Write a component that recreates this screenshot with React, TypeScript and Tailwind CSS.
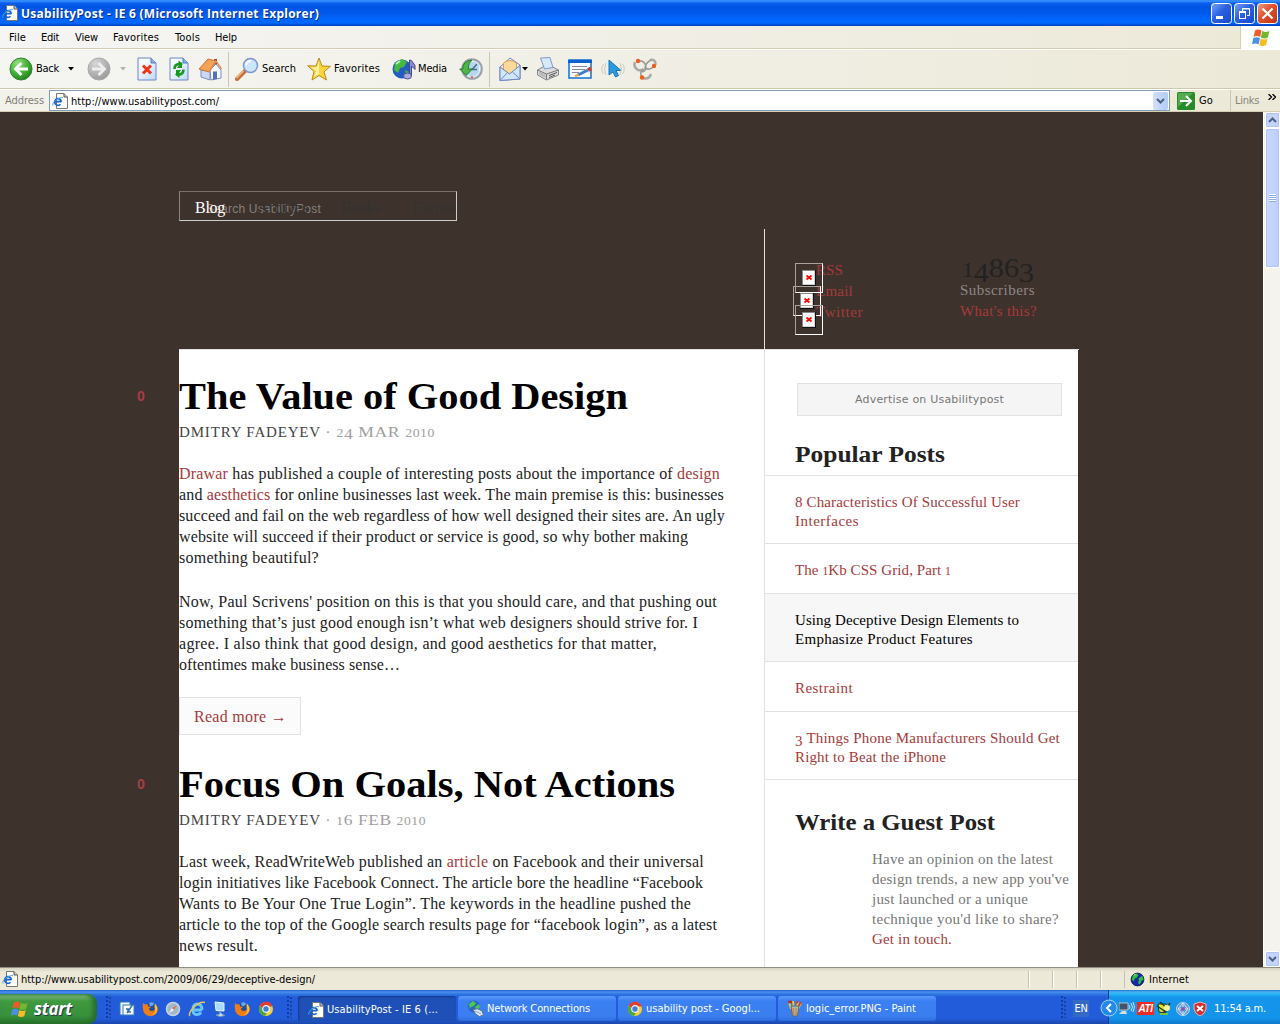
import React, { useLayoutEffect, useRef } from "react";

type FitProps = { w: number; className?: string; children: React.ReactNode; wide?: boolean };

/* One line of text that fills w pixels, by tracking or, when wide, by stretching the letters. */
function Fit({ w, className = "", children, wide }: FitProps) {
  const ref = useRef<HTMLSpanElement>(null);
  useLayoutEffect(() => {
    const el = ref.current;
    if (!el) return;
    el.style.letterSpacing = "";
    el.style.transform = "none";
    const natural = el.getBoundingClientRect().width;
    if (wide) {
      el.style.transform = `scaleX(${w / natural})`;
      return;
    }
    el.style.letterSpacing = "0px";
    const plain = el.getBoundingClientRect().width;
    const count = (el.textContent || "").length;
    el.style.letterSpacing = `${(w - plain) / count}px`;
  }, [w, wide]);
  return (
    <span ref={ref} className={`inline-block origin-left whitespace-nowrap ${className}`}>
      {children}
    </span>
  );
}

/* Text figures: 0-2 at x-height, 6 and 8 tall, the others hanging. */
function Old({ n }: { n: string }) {
  return (
    <>
      {n.split("").map((c, i) =>
        "012".includes(c) ? (
          <span key={i} className="text-[0.78em]">{c}</span>
        ) : "34579".includes(c) ? (
          <span key={i} className="relative top-[0.17em]">{c}</span>
        ) : (
          <span key={i}>{c}</span>
        )
      )}
    </>
  );
}

const serif = "font-['Liberation_Serif',serif]";
const red = "text-[#a63a3a]";

const IEPage = ({ className = "" }: { className?: string }) => (
  <svg width="16" height="16" viewBox="0 0 16 16" className={`shrink-0 ${className}`}>
    <path d="M4.500.5h7.500l3.500 3.500v11.500h-11z" fill="#fdfdf5" stroke="#777" />
    <path d="M12 .5V4h3.500" fill="#ccc" stroke="#555" />
    <path d="M9.300 8.800a3.300 3.300 0 1 0-.8 2.400M3 8.600h6.300" fill="none" stroke="#1765c4" strokeWidth="1.700" />
    <path d="M.8 12.500C0 9 6 4.300 11 4.500" fill="none" stroke="#4aa3ee" strokeWidth="1" />
  </svg>
);
const Flag = ({ s = 20 }: { s?: number }) => (
  <svg width={s} height={s} viewBox="0 0 20 20" className="shrink-0">
    <path d="M4 2.500q3-2 6.500.1L9.200 9q-3-2-6.600-.3z" fill="#ee5a28" />
    <path d="M11.300 3q3.500 2 7.200.1L16.800 9.500q-3.400 1.800-7-.1z" fill="#76b82d" />
    <path d="M2.300 10q3.400-1.800 6.700.2L7.500 16.500q-3-2-6.500-.3z" fill="#4a90e4" />
    <path d="M9.700 10.500q3.400 2 6.900.1L15 17q-3.500 1.800-6.700-.1z" fill="#f6bd22" />
  </svg>
);
const Globe = ({ s = 16 }: { s?: number }) => (
  <svg width={s} height={s} viewBox="0 0 16 16" className="shrink-0">
    <circle cx="8" cy="8" r="6.800" fill="#1428a8" stroke="#092058" />
    <path d="M3 4l4-2.500 2 2-2 2.500-2 1-1 3-2-2zM9 7l4-3 1.500 4-2 1-2 4-2-1 1-3z" fill="#32c232" />
    <path d="M4 3.500l2-1" stroke="#baffba" />
  </svg>
);
const Chrome = () => (
  <svg width="16" height="16" viewBox="0 0 16 16" className="shrink-0">
    <circle cx="8" cy="8" r="7" fill="#f5cf33" />
    <path d="M1.800 4.500A7 7 0 0 1 14.600 5.500H8L5 8.500z" fill="#e33b2e" />
    <path d="M1.800 4.500A7 7 0 0 0 7 15l3-5-5-1z" fill="#48a83f" />
    <circle cx="8" cy="8" r="3.300" fill="#3e7fd8" stroke="#f4f4f4" strokeWidth="1.200" />
  </svg>
);
const Firefox = () => (
  <svg width="17" height="16" viewBox="0 0 17 16" className="shrink-0">
    <circle cx="8.500" cy="8" r="6.300" fill="#244d9c" />
    <path d="M7 2q3-1.500 5 .5l-1 2-3 1z" fill="#6aa6e8" />
    <path d="M1 2l2 1.500L5.500 3 6 5.500 9 6 7 7.500q0 2.500 3 2.500 3-.2 3-4V2.500Q16.500 6 15.500 10 14 15 8.500 15.300 3 15 1.300 10 .3 6 1 2z" fill="#ef7d17" />
    <path d="M12.500 6q3 5-3 8 5-.5 5.800-5.500.2-3-2.500-6z" fill="#ffc52b" />
  </svg>
);
const Net = () => (
  <svg width="17" height="17" viewBox="0 0 17 17" className="shrink-0">
    <circle cx="7" cy="6.500" r="6" fill="#2a64c8" />
    <path d="M2 4l4-3 3 2-2 3-3 1-1 2zM8 7l4-3 1 3-3 4z" fill="#4cc84a" />
    <path d="M6 9.500q5-2 9 1.500l1.500 4-4 1.500-4-2.500z" fill="#dfe9f2" stroke="#53718c" />
    <path d="M8 11l6 3" stroke="#7da2c4" />
  </svg>
);
const PaintCup = () => (
  <svg width="16" height="17" viewBox="0 0 16 17" className="shrink-0">
    <path d="M4 9L2 2M7 9L6 1M9 9l2-7M11 9l3-6" stroke="#f5c73c" strokeWidth="1.800" />
    <path d="M1 2h4" stroke="#a93525" strokeWidth="2.500" />
    <path d="M9 4l2-3M12 6l2-4" stroke="#d93b22" strokeWidth="1.600" />
    <path d="M4 6h8l-1.500 10h-5z" fill="#a8bcae" stroke="#596b67" />
    <path d="M6 8l1 7M9 8v7" stroke="#e96828" />
  </svg>
);
const Caret = ({ c = "#000" }: { c?: string }) => (
  <svg width="6" height="4" viewBox="0 0 6 4" className="shrink-0">
    <path d="M0 0h6L3 3.500z" fill={c} />
  </svg>
);
const Round = ({ on }: { on?: boolean }) => (
  <svg width="24" height="24" viewBox="0 0 24 24" className="shrink-0">
    <defs>
      <radialGradient id={on ? "rg" : "rx"} cx=".35" cy=".25" r=".8">
        <stop offset="0" stopColor={on ? "#94df7d" : "#d7d7d7"} />
        <stop offset=".6" stopColor={on ? "#3fae31" : "#b1b1b1"} />
        <stop offset="1" stopColor={on ? "#24801c" : "#999"} />
      </radialGradient>
    </defs>
    <circle cx="12" cy="12" r="11" fill={on ? "url(#rg)" : "url(#rx)"} stroke={on ? "#36813a" : "#aaa"} />
    <path
      d={on ? "M19 12H7M12.500 6L6.500 12l6 6" : "M5 12h12M11.500 6l6 6-6 6"}
      fill="none" stroke={on ? "#fff" : "#eee"} strokeWidth="2.800"
    />
  </svg>
);
const Doc = ({ refresh }: { refresh?: boolean }) => (
  <svg width="20" height="24" viewBox="0 0 20 24" className="shrink-0">
    <defs>
      <linearGradient id="docg" x1="0" y1="0" x2="1" y2="1"><stop offset=".3" stopColor="#f5f9ff" /><stop offset="1" stopColor="#bcd8fb" /></linearGradient>
    </defs>
    <path d="M1 1h13l5 5v17H1z" fill="url(#docg)" stroke="#6c88c4" />
    <path d="M14 1v5h5" fill="#86b3ec" stroke="#587cbc" />
    {refresh ? (
      <g fill="none" stroke="#159a1e" strokeWidth="2.600">
        <path d="M5.500 12q0-5 5-5M14.500 12.500q0 5-5 5" />
        <path d="M9.500 3.500V11L14 7zM10.500 21v-7.500L6 17.500z" fill="#159a1e" stroke="none" />
        <path d="M13 5v6H8zM7 19v-6h5z" fill="#159a1e" stroke="none" />
      </g>
    ) : (
      <path d="M6 8.500l8 8M14 8.500l-8 8" stroke="#ee3518" strokeWidth="3" />
    )}
  </svg>
);
const Home = () => (
  <svg width="24" height="24" viewBox="0 0 24 24" className="shrink-0">
    <path d="M16 2h3v6h-3z" fill="#a63d2a" />
    <path d="M12 13l6-6 5 6v8l-10 2z" fill="#f8f9ff" stroke="#7a8cc0" />
    <path d="M3 13l9 1v9l-9-3z" fill="#cad8f6" stroke="#7a8cc0" />
    <path d="M1 12L10 2l8 2-7 11z" fill="#f3a258" stroke="#cc7029" />
    <path d="M11 15l7-11 5.500 8" fill="none" stroke="#d89058" strokeWidth="1.500" />
    <path d="M15 14.500h4V22l-4 .7z" fill="#4d74b4" />
  </svg>
);
const Lens = () => (
  <svg width="24" height="24" viewBox="0 0 24 24" className="shrink-0">
    <path d="M2 22l8-8" stroke="#c96e38" strokeWidth="4" strokeLinecap="round" />
    <path d="M1.500 21l7-7" stroke="#f2bb85" strokeWidth="1.500" />
    <circle cx="15.500" cy="8.500" r="7" fill="#cbe6fc" stroke="#8296c9" strokeWidth="1.500" />
    <path d="M11 8q1-4 5-4" stroke="#fff" strokeWidth="2" fill="none" />
  </svg>
);
const StarIcon = () => (
  <svg width="24" height="24" viewBox="0 0 24 24" className="shrink-0">
    <path d="M12 1l3 8 8.500.3-6.500 5.500L19.500 23 12 18.500 5 23l2-8.500L.7 8.800 9 9z" fill="#fbd53b" stroke="#bd8a1c" />
    <path d="M12 4v13l-5 3 2-6-5-4 6 .3z" fill="#fff1a0" />
  </svg>
);
const Media = () => (
  <svg width="24" height="22" viewBox="0 0 24 22" className="shrink-0">
    <circle cx="10" cy="11" r="9.500" fill="#225bc4" />
    <path d="M3 5l7-4 5 3-3 5-4 1-2 5-4-3zM13 12l4 2-3 5z" fill="#46b83b" />
    <path d="M4 6l4-3" stroke="#b6f49b" strokeWidth="2" />
    <path d="M17.500 17V2l2 .5 3.500 5v4l-3.500-3.500V18" fill="#8c8dcc" stroke="#45458f" />
    <ellipse cx="15.500" cy="18" rx="4" ry="3" fill="#a9a9de" stroke="#505095" />
  </svg>
);
const History = () => (
  <svg width="24" height="24" viewBox="0 0 24 24" className="shrink-0">
    <circle cx="13" cy="12" r="9.800" fill="#d8eaf3" stroke="#9aa1a8" strokeWidth="2" />
    <circle cx="13" cy="12" r="7.500" fill="#b4d9ee" stroke="#f5f8fa" strokeDasharray="2 3" />
    <path d="M18 7l-5 5.500h5" fill="none" stroke="#4d6b8f" strokeWidth="1.500" />
    <path d="M13 19v2" stroke="#e2532e" strokeWidth="1.500" />
    <path d="M.7 12h3q0-8 9-9-3.500 3-3.500 9h4l-6 6.500z" fill="#4eb645" stroke="#26792b" />
  </svg>
);
const Mail = () => (
  <svg width="22" height="24" viewBox="0 0 22 24" className="shrink-0">
    <path d="M1 10L11 1l10 7v14L1 23.500z" fill="#e6effc" stroke="#7784c4" />
    <path d="M4.500 6q6-5 13 0v8l-7 3-6-4z" fill="#fbd998" stroke="#daa04e" />
    <path d="M1 10l9.500 7L21 8.500V22L1 23.500z" fill="#cfe7fb" stroke="#6f82c7" />
    <path d="M1 23.500l7.500-8M21 22l-7.500-7" stroke="#6f82c7" />
  </svg>
);
const Printer = () => (
  <svg width="24" height="24" viewBox="0 0 24 24" className="shrink-0">
    <path d="M1.500 13l7-4 8 1 6 3v5l-12 5-9-5z" fill="#ddd" stroke="#81868c" />
    <path d="M4.500 1l9.500-.5L17 10.500l-8.500 1.500z" fill="#d5e8fc" stroke="#7c9cc9" />
    <path d="M1.500 13l9 4 12-4M10.500 17v5.500" fill="none" stroke="#777" />
    <path d="M3 14.500l6.500 3v3.500L3 17.500z" fill="#b9b9b9" />
    <path d="M13 18.500l8-3M13 20.500l6-2.500" stroke="#555" />
  </svg>
);
const Edit = () => (
  <svg width="24" height="20" viewBox="0 0 24 20" className="shrink-0">
    <rect x="1" y="1" width="22" height="18" fill="#f8fcff" stroke="#116fd0" strokeWidth="1.500" />
    <path d="M0 1h24v3H0z" fill="#0961cf" />
    <path d="M4 7.500h15M4 10.500h13M4 13.500h7" stroke="#889" />
    <path d="M10 16l10-5" stroke="#397fd0" strokeWidth="3" />
    <path d="M20 11l3-1.500" stroke="#d83c22" strokeWidth="4" />
    <path d="M7 17.500l3.500-2" stroke="#eba942" strokeWidth="2.500" />
  </svg>
);
const Pointer = () => (
  <svg width="24" height="20" viewBox="0 0 24 20" className="shrink-0">
    <path d="M8 1v15l4-3 2.500 5 3-1.500-2.500-5h5z" fill="#299be2" stroke="#1a74b7" />
    <path d="M5 4q-3 6 0 12M2.500 5q-3.500 5 0 10M19 4q3 6 0 12M21.500 5q3.500 5 0 10" stroke="#c9c9c3" fill="none" />
  </svg>
);
const Knot = () => (
  <svg width="24" height="23" viewBox="0 0 24 23" className="shrink-0">
    <g fill="none">
      <path d="M2 4Q0 9 5 12q4 1 6-1M17 2q6-1 5.500 5M10 20q6 2 8-4" stroke="#aaa" strokeWidth="2.500" />
      <path d="M5 3q7-1 8 6 0 4-4 5M12 11q0-6 6-9M9 19q-3-4 1-8M21 8q-4 5-9 2" stroke="#999" strokeWidth="1.500" />
    </g>
    <circle cx="5" cy="3" r="2.200" fill="#f25d16" />
    <circle cx="21" cy="8" r="2.200" fill="#f25d16" />
    <circle cx="9" cy="19.500" r="2.200" fill="#f25d16" />
  </svg>
);
const WinButton = ({ kind }: { kind: "min" | "restore" | "close" }) => (
  <svg width="21" height="21" viewBox="0 0 21 21" className="shrink-0">
    <defs>
      <linearGradient id={`wb${kind}`} x1="0" y1="0" x2="1" y2="1">
        <stop offset="0" stopColor={kind === "close" ? "#f0a08a" : "#7aa4f6"} />
        <stop offset=".45" stopColor={kind === "close" ? "#e0502c" : "#2b61e0"} />
        <stop offset="1" stopColor={kind === "close" ? "#bd3410" : "#1749cd"} />
      </linearGradient>
    </defs>
    <rect x=".5" y=".5" width="20" height="20" rx="3" fill={`url(#wb${kind})`} stroke="#fff" />
    {kind === "min" && <path d="M5 14.500h7" stroke="#fff" strokeWidth="3" />}
    {kind === "restore" && (
      <g fill="none" stroke="#fff">
        <path d="M8.500 8V5.500h7v7H13M8 6h8" />
        <rect x="5.500" y="9.500" width="6" height="6" /><path d="M5 9h7" strokeWidth="2" />
      </g>
    )}
    {kind === "close" && <path d="M5.500 5.500l10 10M15.500 5.500l-10 10" stroke="#fff" strokeWidth="2.200" />}
  </svg>
);
const ScrollButton = ({ down }: { down?: boolean }) => (
  <div className="flex h-[16px] w-[15px] shrink-0 items-center justify-center rounded-[2px] border border-white bg-[#c4d4fb] shadow-[inset_0_0_0_1px_#b0c5f5]">
    <svg width="9" height="6" viewBox="0 0 9 6">
      <path d={down ? "M1 1l3.500 3.500L8 1" : "M1 5l3.500-3.500L8 5"} stroke="#4d6185" strokeWidth="2" fill="none" />
    </svg>
  </div>
);

function MissingImage({ className = "" }: { className?: string }) {
  return (
    <div className={`absolute h-[30px] w-[28px] border border-b-white border-l-[#aaa39c] border-r-white border-t-[#aaa39c] ${className}`}>
      <svg width="14" height="16" viewBox="0 0 14 16" className="ml-[6px] mt-[6px]">
        <path d="M0 0h14v16H0z" fill="#111" />
        <path d="M0 0h13v15H0z" fill="#888" />
        <path d="M1 1h12v14H1z" fill="#d0d0d0" />
        <path d="M1 1h11v13H1z" fill="#fff" />
        <path d="M4.500 5.500l5 4M9.500 5.500l-5 4" stroke="#f00" strokeWidth="1.800" />
      </svg>
    </div>
  );
}

function Tool({ icon, text, w, gap = "gap-[3px]" }: { icon: React.ReactNode; text: string; w: number; gap?: string }) {
  return <div className={`flex shrink-0 items-center ${gap}`}>{icon}<Fit w={w}>{text}</Fit></div>;
}

function Browser() {
  return (
    <>
      <div className="flex h-[26px] shrink-0 items-center bg-[linear-gradient(#2a7ff5_0px,#3b95ff_1px,#0a5ff0_3px,#0054e3_7px,#0058ea_13px,#0068ff_20px,#0067fd_23px,#003fbb_26px)] pl-[2px] pr-[2px]">
        <IEPage />
        <Fit w={298} className="ml-[3px] mt-px font-['Open_Sans',sans-serif] text-[12px] font-bold text-white [text-shadow:1px_1px_#0a2f90]">UsabilityPost - IE 6 (Microsoft Internet Explorer)</Fit>
        <div className="ml-auto flex gap-[2px]"><WinButton kind="min" /><WinButton kind="restore" /><WinButton kind="close" /></div>
      </div>
      <div className="flex h-[24px] shrink-0 border-b border-white bg-[linear-gradient(90deg,#f5f5f4,#ece9d8)]">
        <div className="flex grow items-center border-b border-[#d5ceb2] pl-[9px] pt-px">
          <Fit w={17} className="mr-[15px]">File</Fit><Fit w={18} className="mr-[16px]">Edit</Fit>
          <Fit w={23} className="mr-[15px]">View</Fit><Fit w={46} className="mr-[16px]">Favorites</Fit>
          <Fit w={25} className="mr-[15px]">Tools</Fit><Fit w={22}>Help</Fit>
        </div>
        <div className="flex w-[40px] items-center justify-center border-l border-[#d5ceb2] bg-white"><Flag /></div>
      </div>
      <div className="flex h-[39px] shrink-0 items-center border-b border-[#cfc9ac] bg-[linear-gradient(90deg,#f5f5f2,#ece9d8)] pl-[9px]">
        <Tool icon={<Round on />} text="Back" w={23} /><div className="w-[9px]" /><Caret />
        <div className="w-[13px]" /><Round /><div className="w-[9px]" /><Caret c="#b5b3a8" />
        <div className="w-[11px]" /><Doc /><div className="w-[12px]" /><Doc refresh /><div className="w-[9px]" /><Home />
        <div className="ml-[6px] mr-[6px] h-[35px] w-px bg-[#c9c6b2]" />
        <Tool icon={<Lens />} text="Search" w={34} /><div className="w-[11px]" />
        <Tool icon={<StarIcon />} text="Favorites" w={46} /><div className="w-[12px]" />
        <Tool icon={<Media />} text="Media" w={29} gap="gap-[2px]" /><div className="w-[12px]" /><History />
        <div className="ml-[6px] mr-[9px] h-[35px] w-px bg-[#c9c6b2]" />
        <Mail /><div className="w-px" /><Caret /><div className="w-[8px]" /><Printer /><div className="w-[8px]" /><Edit />
        <div className="w-[9px]" /><Pointer /><div className="w-[8px]" /><Knot />
      </div>
      <div className="flex h-[23px] shrink-0 items-center border-b border-[#d6cfb4] border-t border-t-white bg-[linear-gradient(90deg,#f3f2ea,#ece9d8)] pl-[5px]">
        <Fit w={39} className="mt-px text-[#7e7e76]">Address</Fit>
        <div className="ml-[5px] flex h-[21px] w-[1121px] shrink-0 items-center border border-[#7f9db9] bg-white pl-[2px]">
          <IEPage /><Fit w={148} className="ml-[3px] mt-[2px]">http://www.usabilitypost.com/</Fit>
          <div className="ml-auto mr-px flex h-[18px] w-[15px] items-center justify-center rounded-[2px] bg-[linear-gradient(90deg,#d4e0fd,#b4caf8)]">
            <svg width="9" height="6" viewBox="0 0 9 6"><path d="M1 1l3.500 3.500L8 1" stroke="#4d6185" strokeWidth="2" fill="none" /></svg>
          </div>
        </div>
        <svg width="18" height="18" viewBox="0 0 18 18" className="ml-[7px] shrink-0">
          <rect width="18" height="18" rx="1.500" fill="#268b2a" /><path d="M1 1h15L1 15z" fill="#54ab4b" />
          <path d="M3 9h11M9 4l5 5-5 5" fill="none" stroke="#fff" strokeWidth="2" />
        </svg>
        <Fit w={14} className="ml-[4px]">Go</Fit>
        <div className="ml-[17px] h-[21px] w-px bg-[#cbc6b0]" />
        <Fit w={24} className="ml-[4px] text-[#85857c]">Links</Fit>
        <svg width="8" height="6" viewBox="0 0 8 6" className="mb-[8px] ml-[9px]"><path d="M.5 0l3 3-3 3M4.500 0l3 3-3 3" fill="none" stroke="#000" strokeWidth="1.300" /></svg>
      </div>
    </>
  );
}

function Post({ title, titleW, month, lines, date, dateW }: { title: string; titleW: number; month: string; date: string[]; dateW: number; lines: React.ReactNode }) {
  return (
    <article className="relative">
      <span className="absolute -left-[42px] top-[16px] font-['Liberation_Sans',sans-serif] text-[14px] font-bold leading-[20px] text-[#a83e3e]">0</span>
      <h2 className="flex h-[52px] items-center text-[38px] font-bold leading-[52px] text-black"><Fit wide w={titleW}>{title}</Fit></h2>
      <div className="flex h-[21px] items-center text-[15px] leading-[21px] text-[#444]">
        <Fit w={142}>DMITRY FADEYEV</Fit>
        <Fit wide w={dateW} className="ml-[4px] tracking-[0.5px] text-[#a0a0a0]">· <Old n={date[0]} /> {month} <Old n={date[1]} /></Fit>
      </div>
      <div className="mt-[20px] flex flex-col items-start text-[16px] leading-[21px] text-[#222]">{lines}</div>
    </article>
  );
}

const R = ({ children }: { children: React.ReactNode }) => <span className={red}>{children}</span>;

function Popular({ h, lines, hot }: { h: string; lines: [React.ReactNode, number][]; hot?: boolean }) {
  return (
    <li className={`flex flex-col items-start justify-center border-b border-[#e2e2e2] pl-[30px] text-[15px] leading-[19px] ${h} ${hot ? "bg-[#f7f7f7] text-black" : red}`}>
      {lines.map(([t, w], i) => <Fit key={i} w={w}>{t}</Fit>)}
    </li>
  );
}

function Page() {
  return (
    <div className={`w-[1263px] overflow-hidden bg-[#3e322d] ${serif}`}>
      <header className="flex h-[237px] pl-[179px]">
        <div className="w-[585px] pt-[79px]">
          <div className="relative flex h-[30px] w-[278px] items-center border border-b-[#ccc] border-l-[#8b8580] border-r-[#ccc] border-t-[#77706c] pl-[26px] font-['Liberation_Sans',sans-serif] text-[12px] text-[#85807c]">
            <Fit w={115} className="mt-[6px]">Search UsabilityPost</Fit>
            <nav className={`absolute left-[15px] top-[4px] flex text-[16px] leading-[24px] text-[#333230] ${serif}`}>
              <Fit w={30} className="mr-[32px] text-white">Blog</Fit>
              <Fit w={51} className="mr-[33px]">Articles</Fit>
              <Fit w={39} className="mr-[32px]">Books</Fit>
              <Fit w={44}>Forum</Fit>
            </nav>
          </div>
        </div>
        <div className="relative mt-[117px] flex h-[120px] w-[315px] border-l border-[#e2e2e2] pt-[31px] text-[15px] leading-[21px]">
          <div className={`ml-[51px] flex w-[144px] flex-col items-start ${red}`}>
            <Fit w={27}>RSS</Fit><Fit w={37}>Email</Fit><Fit w={47}>Twitter</Fit>
          </div>
          <div className="flex flex-col items-start">
            <div className="-mt-[4px] h-[24px] pl-[2px] text-[28px] leading-[24px] text-[#222]"><Fit wide w={72}><Old n="14863" /></Fit></div>
            <Fit w={75} className="text-[#8d8884]">Subscribers</Fit>
            <Fit w={77} className={red}>What's this?</Fit>
          </div>
          <MissingImage className="left-[30px] top-[34px]" />
          <MissingImage className="left-[28px] top-[57px]" />
          <MissingImage className="left-[30px] top-[76px]" />
        </div>
      </header>
      <div className="ml-[179px] flex h-[618px] w-[900px] border-t border-[#e2e2e2]">
        <main className="w-[585px] bg-white pt-[20px]">
          <Post title="The Value of Good Design" titleW={449} date={["24", "2010"]} month="MAR" dateW={110}
            lines={<>
              <Fit w={541}><R>Drawar</R> has published a couple of interesting posts about the importance of <R>design</R></Fit>
              <Fit w={545}>and <R>aesthetics</R> for online businesses last week. The main premise is this: businesses</Fit>
              <Fit w={546}>succeed and fail on the web regardless of how well designed their sites are. An ugly</Fit>
              <Fit w={509}>website will succeed if their product or service is good, so why bother making</Fit>
              <Fit w={140}>something beautiful?</Fit>
              <div className="h-[23px]" />
              <Fit w={538}>Now, Paul Scrivens' position on this is that you should care, and that pushing out</Fit>
              <Fit w={519}>something that’s just good enough isn’t what web designers should strive for. I</Fit>
              <Fit w={478}>agree. I also think that good design, and good aesthetics for that matter,</Fit>
              <Fit w={221}>oftentimes make business sense…</Fit>
              <div className={`mt-[22px] flex h-[38px] w-[122px] items-center border border-[#e2e2e2] bg-[#fbfbfb] pl-[14px] ${red}`}><Fit w={93}>Read more →</Fit></div>
            </>} />
          <div className="h-[23px]" />
          <Post title="Focus On Goals, Not Actions" titleW={496} date={["16", "2010"]} month="FEB" dateW={101}
            lines={<>
              <Fit w={525}>Last week, ReadWriteWeb published an <R>article</R> on Facebook and their universal</Fit>
              <Fit w={524}>login initiatives like Facebook Connect. The article bore the headline “Facebook</Fit>
              <Fit w={512}>Wants to Be Your One True Login”. The keywords in the headline pushed the</Fit>
              <Fit w={538}>article to the top of the Google search results page for “facebook login”, as a latest</Fit>
              <Fit w={79}>news result.</Fit>
            </>} />
        </main>
        <aside className="w-[314px] border-l border-[#e2e2e2] bg-white pt-[33px]">
          <div className="ml-[32px] flex h-[33px] w-[265px] items-center justify-center border border-[#e2e2e2] bg-[#f5f5f5] pt-px font-['DejaVu_Sans',sans-serif] text-[11px] text-[#777]"><Fit w={149}>Advertise on Usabilitypost</Fit></div>
          <h3 className="mt-[28px] flex h-[32px] items-start border-b border-[#e2e2e2] pl-[30px] text-[23px] font-bold leading-[22px] text-[#222]"><Fit wide w={150}>Popular Posts</Fit></h3>
          <ul>
            <Popular h="h-[68px] pt-[5px]" lines={[["8 Characteristics Of Successful User", 225], ["Interfaces", 64]]} />
            <Popular h="h-[50px] pt-[4px]" lines={[[<>The <Old n="1" />Kb CSS Grid, Part <Old n="1" /></>, 156]]} />
            <Popular hot h="h-[68px] pt-[5px]" lines={[["Using Deceptive Design Elements to", 224], ["Emphasize Product Features", 178]]} />
            <Popular h="h-[50px] pt-[4px]" lines={[["Restraint", 58]]} />
            <Popular h="h-[68px] pt-[5px]" lines={[[<><Old n="3" /> Things Phone Manufacturers Should Get</>, 265], ["Right to Beat the iPhone", 151]]} />
          </ul>
          <h3 className="mt-[32px] flex h-[37px] pl-[30px] text-[23px] font-bold leading-[22px] text-[#222]"><Fit wide w={200}>Write a Guest Post</Fit></h3>
          <div className="flex flex-col items-start pl-[107px] text-[15px] leading-[20px] text-[#777]">
            <Fit w={181}>Have an opinion on the latest</Fit>
            <Fit w={197}>design trends, a new app you've</Fit>
            <Fit w={156}>just launched or a unique</Fit>
            <Fit w={187}>technique you'd like to share?</Fit>
            <Fit w={80} className={red}>Get in touch.</Fit>
          </div>
        </aside>
      </div>
    </div>
  );
}

const Dots = ({ className = "" }: { className?: string }) => (
  <svg width="6" height="22" viewBox="0 0 6 22" className={`shrink-0 ${className}`}>
    {[0, 4, 8, 12, 16, 20].map((y) => <g key={y}><rect x="0" y={y} width="2" height="2" fill="#153c9b" /><rect x="3" y={y + 1} width="2" height="2" fill="#1742a5" /></g>)}
  </svg>
);

function Task({ icon, text, w, active }: { icon: React.ReactNode; text: string; w: number; active?: boolean }) {
  return (
    <div className={`flex h-[25px] w-[158px] shrink-0 items-center rounded-[3px] text-white ${active ? "bg-[#1e50b8] pl-[10px] pt-[2px] shadow-[inset_1px_1px_2px_#123987]" : "bg-[linear-gradient(#5a98fa,#3b80f2_5px,#3a7ef0_20px,#2e6cdb)] pl-[9px]"}`}>
      {icon}<Fit w={w} className="ml-[3px]">{text}</Fit>
    </div>
  );
}

function Taskbar() {
  return (
    <div className="flex h-[34px] shrink-0 items-center bg-[linear-gradient(#1f5ac8_0px,#4a90ee_2px,#3078e2_4px,#235cdb_7px,#235cdb_28px,#1b47ad_34px)]">
      <div className="mt-[4px] flex h-[30px] w-[97px] shrink-0 items-center rounded-r-[9px] bg-[linear-gradient(#5ea15c,#79b577_2px,#419a40_7px,#37903b_22px,#26702b)] pl-[10px] shadow-[inset_-4px_0_5px_#246c2a]">
        <Flag s={19} /><Fit w={38} className="ml-[5px] font-['Open_Sans',sans-serif] text-[17px] font-bold italic leading-[20px] text-white [text-shadow:1px_1px_1px_#234]">start</Fit>
      </div>
      <Dots className="ml-[9px]" />
      <div className="ml-[7px] mt-[3px] flex w-[155px] shrink-0 justify-between">
        <svg width="16" height="16" viewBox="0 0 16 16"><rect x="1" y="1" width="10" height="13" rx="1" fill="#e9f5ff" stroke="#317abe" /><rect x="4" y="4" width="11" height="10" fill="#f9fbff" stroke="#387bbb" /><path d="M8 12L14 3M7 8h2v3h3" stroke="#2c72a8" fill="none" strokeWidth="1.500" /></svg>
        <Firefox />
        <svg width="16" height="16" viewBox="0 0 16 16"><circle cx="8" cy="8" r="6.500" fill="#9eb8cf" stroke="#ccd4db" strokeWidth="1.500" /><path d="M12 4L9 9 4 12l3-5z" fill="#f4f4f4" /><path d="M12 4L9 9 7 7z" fill="#e26143" /></svg>
        <svg width="18" height="16" viewBox="0 0 18 16"><path d="M14 9H5q0 5 4 4.500 3-.1 4-2M5 8q0-5 4.500-5Q14 3 14 9" fill="none" stroke="#65c7fa" strokeWidth="2.800" /><path d="M2 15Q0 13 5 7q7-7 12-5.500" stroke="#e9c84c" strokeWidth="1.500" fill="none" /></svg>
        <svg width="15" height="16" viewBox="0 0 15 16"><path d="M2 1l9 1v8l-8-.5z" fill="#a8dcfa" stroke="#e6f5ff" /><path d="M6 10l1 3-4 1 4 1.500 5-1-3-1.500" fill="#d5e6f3" stroke="#7099bd" /></svg>
        <Firefox /><Chrome />
      </div>
      <Dots className="ml-[13px]" />
      <div className="ml-[5px] mt-[3px] flex gap-[2px]">
        <Task active icon={<IEPage />} text="UsabilityPost - IE 6 (..." w={111} />
        <Task icon={<Net />} text="Network Connections" w={103} />
        <Task icon={<Chrome />} text="usability post - Googl..." w={114} />
        <Task icon={<PaintCup />} text="logic_error.PNG - Paint" w={110} />
      </div>
      <Dots className="ml-auto mr-[6px]" />
      <div className="mt-[3px] flex h-[17px] w-[16px] items-center justify-center bg-[#3469c5] text-white"><Fit w={13}>EN</Fit></div>
      <div className="relative ml-[19px] flex h-[34px] w-[172px] shrink-0 items-center gap-[2px] border-l border-[#123b93] bg-[linear-gradient(#1e75d0_0px,#4bb1f2_2px,#27b8f2_4px,#1596ec_7px,#1294ea_28px,#1279cc_34px)] pl-[10px] pt-[3px] text-white">
        <svg width="18" height="18" viewBox="0 0 18 18" className="absolute -left-[9px] top-[9px]"><circle cx="9" cy="9" r="8" fill="#248ae6" stroke="#9bd1fa" /><path d="M11 5L7 9l4 4" fill="none" stroke="#fff" strokeWidth="2" /></svg>
        <svg width="16" height="16" viewBox="0 0 16 16"><path d="M0 2h9v7H0z" fill="#42536d" stroke="#b7c1cb" /><path d="M3 10l-3 3h8l-1-3z" fill="#d5dce3" /><path d="M10 4q2 2 0 4M12 2q3 4 0 8M14 1q3 5 0 10" fill="none" stroke="#cbdcef" /></svg>
        <div className="flex h-[13px] w-[17px] items-center justify-center bg-[#f22b22] font-['Liberation_Sans',sans-serif] text-[10px] font-bold italic"><Fit w={14}>ATI</Fit></div>
        <svg width="17" height="16" viewBox="0 0 17 16"><path d="M2 3h8l2 4-3 5-6-1z" fill="#dce637" stroke="#22321e" /><path d="M4 1l9 8M1 5l9 6M6 14l8-12" stroke="#243b27" strokeWidth="1.500" /><circle cx="11" cy="7" r="3" fill="#f4f5a0" /><path d="M4 13h8" stroke="#7ebf3a" strokeWidth="2" /></svg>
        <svg width="16" height="16" viewBox="0 0 16 16"><circle cx="8" cy="8" r="6.500" fill="#629cd9" stroke="#b9d4f0" /><path d="M8 2l5 6-5 6-5-6zM3 8h10M8 3v10" fill="none" stroke="#d7def2" /><circle cx="8" cy="8" r="2" fill="#83589f" /></svg>
        <svg width="14" height="16" viewBox="0 0 14 16"><path d="M7 1l6 2v5q-1 5-6 7-5-2-6-7V3z" fill="#d52d2f" stroke="#efb5b2" /><path d="M4 5l6 5M10 5l-6 5" stroke="#fff" strokeWidth="2" /></svg>
        <Fit w={52} className="ml-[5px] mt-px">11:54 a.m.</Fit>
      </div>
    </div>
  );
}

export default function App() {
  return (
    <div className="flex h-[1024px] w-[1280px] flex-col overflow-hidden font-['DejaVu_Sans_Condensed','DejaVu_Sans',sans-serif] text-[11px] leading-[14px] text-black">
      <Browser />
      <div className="flex h-[855px] shrink-0">
        <Page />
        <div className="flex w-[17px] flex-col items-center border-l border-white bg-[#f4f3ee]">
          <ScrollButton />
          <div className="flex h-[140px] w-[15px] items-center justify-center rounded-[2px] border border-white bg-[linear-gradient(90deg,#cad9fe,#bccffa)] shadow-[inset_0_0_0_1px_#afc5f7]">
            <div className="h-[8px] w-[7px] bg-[repeating-linear-gradient(#fff_0px_1px,#8fadea_1px_2px)]" />
          </div>
          <div className="mt-auto"><ScrollButton down /></div>
        </div>
      </div>
      <div className="flex h-[23px] shrink-0 items-center border-t border-[#918f83] bg-[linear-gradient(#d8d4c3,#ece9d8_4px,#ece9d8)] pl-[2px]">
        <IEPage /><Fit w={294} className="ml-[3px] mt-[2px]">http://www.usabilitypost.com/2009/06/29/deceptive-design/</Fit>
        <div className="ml-auto flex h-[17px] w-[252px] items-center">
          {[0, 1, 2, 3].map((i) => <div key={i} className="h-full w-[24px] border-l border-[#c5c2b2] shadow-[inset_1px_0_#fff]" />)}
          <div className="flex h-full grow items-center gap-[4px] border-l border-[#c5c2b2] pl-[5px]"><Globe s={15} /><Fit w={40} className="mt-[2px]">Internet</Fit></div>
        </div>
      </div>
      <Taskbar />
    </div>
  );
}
